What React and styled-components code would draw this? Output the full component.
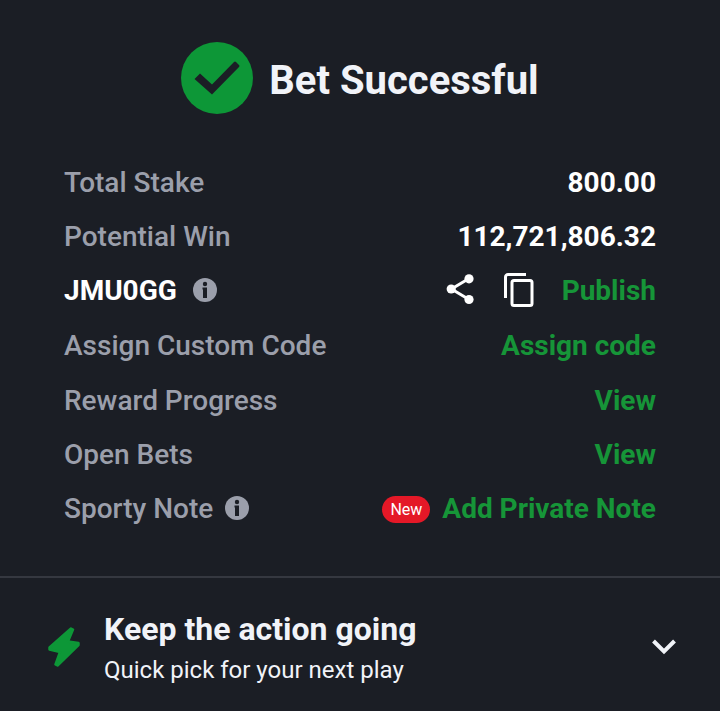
import React from "react";
import styled, { createGlobalStyle } from "styled-components";

const GlobalStyle = createGlobalStyle`
  * { box-sizing: border-box; }
  body { margin: 0; background: #1b1e25; color: #fff; font-family: Roboto, "Liberation Sans", sans-serif; }
  button { font: inherit; color: inherit; background: none; border: 0; padding: 0; cursor: pointer; }
`;

const Page = styled.main`
  min-height: 100vh;
  background: #1b1e25;
`;

const Header = styled.header`
  display: flex;
  align-items: center;
  justify-content: center;
  gap: 16px;
  padding: 42px 16px 0;
`;

const Title = styled.h1`
  margin: 0;
  padding-top: 6px;
  font-size: 40px;
  line-height: 48px;
  font-weight: 700;
  color: #f1f3f8;
`;

const Details = styled.section`
  display: grid;
  padding: 42px 64px 40px;
  border-bottom: 2px solid #353840;
`;

const Row = styled.div`
  display: flex;
  align-items: center;
  justify-content: space-between;
  height: ${(p) => (p.$tall ? 56 : 54)}px;
  font-size: 28px;
  line-height: 32px;
`;

const Group = styled.div`
  display: flex;
  align-items: center;
  gap: ${(p) => p.$gap || 12}px;
`;

const Label = styled.span`
  font-weight: 500;
  color: #9b9fab;
`;

const Value = styled.span`
  font-weight: 700;
  color: #fff;
`;

const Action = styled.button`
  && { font-weight: 700; color: #169538; }
`;

const IconButton = styled.button`
  && {
    display: flex;
    padding-bottom: 2px;
  }
`;

const Badge = styled.span`
  padding: 0 8px;
  border-radius: 14px;
  background: #e41827;
  color: #fff;
  font-size: 16px;
  line-height: 27px;
`;

const Promo = styled.button`
  && {
    display: flex;
    align-items: center;
    width: 100%;
    gap: 24px;
    padding: 30px 42px 20px 48px;
    text-align: left;
    color: #f1f3f8;
  }
`;

const PromoIcon = styled.svg`
  flex: none;
  margin-bottom: 4px;
`;

const PromoText = styled.span`
  display: grid;
  flex: 1;
`;

const PromoTitle = styled.span`
  font-size: 32px;
  line-height: 42px;
  font-weight: 700;
`;

const PromoSub = styled.span`
  font-size: 24px;
  line-height: 40px;
`;

const Info = ({ label }) => (
  <IconButton type="button" aria-label={label}>
    <svg width="24" height="24" viewBox="0 0 24 24">
      <circle cx="12" cy="12" r="12" fill="#9b9fab" />
      <circle cx="12" cy="6" r="2.200" fill="#1b1e25" />
      <path d="M9.500 9.500H14V20h-4v-8.500h-.5z" fill="#1b1e25" />
    </svg>
  </IconButton>
);

export default function App() {
  return (
    <Page>
      <GlobalStyle />
      <Header>
        <svg width="72" height="72" viewBox="0 0 72 72" aria-hidden="true">
          <circle cx="36" cy="36" r="36" fill="#0d9737" />
          <path
            d="M13.500 37L19 31.500l12 11L53 20q1-1 2 0l3 3q1 1 0 2L31 52.500z"
            fill="#1b1e25"
          />
        </svg>
        <Title>Bet Successful</Title>
      </Header>
      <Details>
        <Row><Label>Total Stake</Label><Value>800.00</Value></Row>
        <Row><Label>Potential Win</Label><Value>112,721,806.32</Value></Row>
        <Row>
          <Group $gap={16}><Value>JMU0GG</Value><Info label="About the booking code" /></Group>
          <Group $gap={28}>
            <IconButton type="button" aria-label="Share">
              <svg width="30" height="32" viewBox="0 0 30 32">
                <path d="M23 4.500L5.500 15 23 25.500" fill="none" stroke="#fff" strokeWidth="3" />
                <circle cx="23" cy="4.800" r="4.600" fill="#fff" />
                <circle cx="5.200" cy="15" r="4.600" fill="#fff" />
                <circle cx="23" cy="25.500" r="4.600" fill="#fff" />
              </svg>
            </IconButton>
            <IconButton type="button" aria-label="Copy code">
              <svg width="30" height="34" viewBox="0 0 30 34" fill="none" stroke="#fff" strokeWidth="3">
                <path d="M22 1.500H4A2.500 2.500 0 0 0 1.500 4v21" />
                <rect x="8" y="7.500" width="20" height="25" rx="2" />
              </svg>
            </IconButton>
            <Action type="button">Publish</Action>
          </Group>
        </Row>
        <Row $tall><Label>Assign Custom Code</Label><Action type="button">Assign code</Action></Row>
        <Row><Label>Reward Progress</Label><Action type="button">View</Action></Row>
        <Row><Label>Open Bets</Label><Action type="button">View</Action></Row>
        <Row>
          <Group><Label>Sporty Note</Label><Info label="About Sporty Note" /></Group>
          <Group><Badge>New</Badge><Action type="button">Add Private Note</Action></Group>
        </Row>
      </Details>
      <Promo type="button" aria-expanded="false">
        <PromoIcon width="32" height="40" viewBox="0 0 32 40" aria-hidden="true">
          <path
            d="M23 1.500L1.500 20.500V22.500L12 25 7.500 37.500 9.500 38.500 30.500 18V16L20 14.500 25 2.500z"
            fill="#0d9737" stroke="#0d9737" strokeWidth="2.500" strokeLinejoin="round"
          />
        </PromoIcon>
        <PromoText>
          <PromoTitle>Keep the action going</PromoTitle>
          <PromoSub>Quick pick for your next play</PromoSub>
        </PromoText>
        <PromoIcon width="28" height="18" viewBox="0 0 28 18" fill="none" stroke="#f1f3f8" strokeWidth="4" aria-hidden="true">
          <path d="M3.500 3L14 13.500 24.500 3" />
        </PromoIcon>
      </Promo>
    </Page>
  );
}
